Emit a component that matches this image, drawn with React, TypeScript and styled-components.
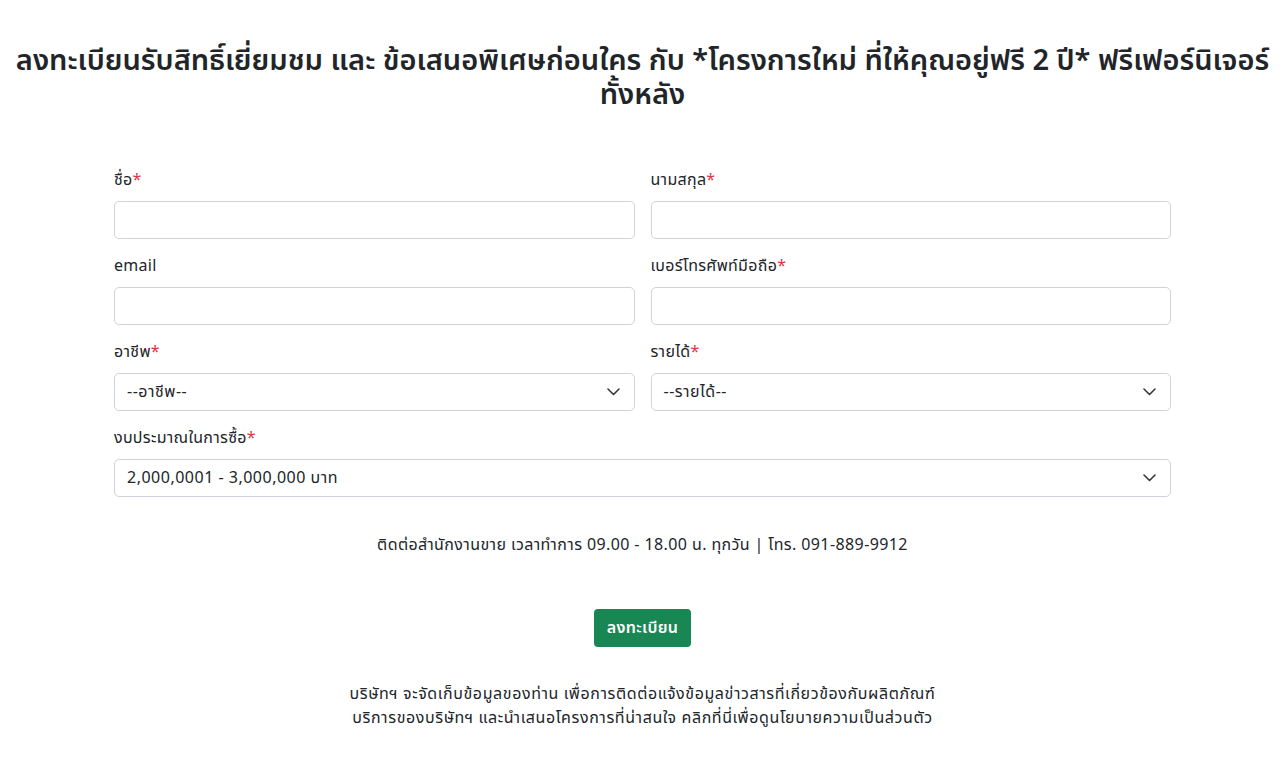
import React from "react";
import styled, { createGlobalStyle } from "styled-components";

const Global = createGlobalStyle`
  body {
    margin: 0;
    background: #ffffff;
    font-family: "Noto Sans Thai", "Noto Sans", "Liberation Sans", sans-serif;
    color: #212529;
  }
`;

const Page = styled.div`
  display: flex;
  flex-direction: column;
  align-items: center;
  padding-top: 44px;
`;

const Title = styled.h1`
  margin: 0;
  font-size: 29px;
  font-weight: 600;
  line-height: 34px;
  text-align: center;
  color: #212529;
  width: 1285px;
`;

const Form = styled.form`
  width: 1057px;
  margin-top: 58px;
  display: grid;
  grid-template-columns: 1fr 1fr;
  column-gap: 16px;
  row-gap: 17px;
`;

const Field = styled.div<{ $full?: boolean }>`
  display: flex;
  flex-direction: column;
  gap: 11px;
  grid-column: ${(p) => (p.$full ? "1 / -1" : "auto")};
`;

const Label = styled.label`
  font-size: 16px;
  letter-spacing: 0.3px;
  line-height: 20px;
  height: 20px;
  color: #212529;
`;

const Req = styled.span`
  color: #dc3545;
`;

const Input = styled.input`
  box-sizing: border-box;
  height: 38px;
  width: 100%;
  border: 1px solid #ced4da;
  border-radius: 5px;
  padding: 6px 12px;
  font: inherit;
  font-size: 16px;
`;

const SelectWrap = styled.div`
  position: relative;
  height: 38px;
  box-sizing: border-box;
  border: 1px solid #ced4da;
  border-radius: 5px;
  display: flex;
  align-items: center;
  padding: 0 12px;
  font-size: 16px;
  letter-spacing: 0.5px;
  color: #212529;
`;

const Chevron = styled.svg`
  position: absolute;
  right: 14px;
  top: 50%;
  transform: translateY(-50%);
`;

const Contact = styled.p`
  margin: 38px 0 0;
  font-size: 16px;
  letter-spacing: 0.4px;
  line-height: 20px;
  text-align: center;
`;

const Button = styled.button`
  margin-top: 54px;
  background: #198754;
  color: #fff;
  border: none;
  border-radius: 4px;
  height: 38px;
  padding: 0 13px;
  font: inherit;
  font-size: 16px;
  letter-spacing: 0.3px;
  font-weight: 600;
`;

const Footer = styled.p`
  margin: 35px 0 0;
  font-size: 16px;
  letter-spacing: 0.6px;
  line-height: 24px;
  text-align: center;
`;

const Select = ({ value }: { value: string }) => (
  <SelectWrap>
    {value}
    <Chevron width="13" height="8" viewBox="0 0 13 8">
      <path d="M1 1l5.5 5.5L12 1" fill="none" stroke="#343a40" strokeWidth="1.6" strokeLinecap="round" strokeLinejoin="round" />
    </Chevron>
  </SelectWrap>
);

export default function App() {
  return (
    <>
      <Global />
      <Page>
        <Title>
          ลงทะเบียนรับสิทธิ์เยี่ยมชม และ ข้อเสนอพิเศษก่อนใคร กับ *โครงการใหม่ ที่ให้คุณอยู่ฟรี 2 ปี* ฟรีเฟอร์นิเจอร์
          <br />
          ทั้งหลัง
        </Title>
        <Form>
          <Field>
            <Label>ชื่อ<Req>*</Req></Label>
            <Input />
          </Field>
          <Field>
            <Label>นามสกุล<Req>*</Req></Label>
            <Input />
          </Field>
          <Field>
            <Label>email</Label>
            <Input />
          </Field>
          <Field>
            <Label>เบอร์โทรศัพท์มือถือ<Req>*</Req></Label>
            <Input />
          </Field>
          <Field>
            <Label>อาชีพ<Req>*</Req></Label>
            <Select value="--อาชีพ--" />
          </Field>
          <Field>
            <Label>รายได้<Req>*</Req></Label>
            <Select value="--รายได้--" />
          </Field>
          <Field $full>
            <Label>งบประมาณในการซื้อ<Req>*</Req></Label>
            <Select value="2,000,0001 - 3,000,000 บาท" />
          </Field>
        </Form>
        <Contact>ติดต่อสำนักงานขาย เวลาทำการ 09.00 - 18.00 น. ทุกวัน | โทร. 091-889-9912</Contact>
        <Button type="button">ลงทะเบียน</Button>
        <Footer>
          บริษัทฯ จะจัดเก็บข้อมูลของท่าน เพื่อการติดต่อแจ้งข้อมูลข่าวสารที่เกี่ยวข้องกับผลิตภัณฑ์
          <br />
          บริการของบริษัทฯ และนำเสนอโครงการที่น่าสนใจ คลิกที่นี่เพื่อดูนโยบายความเป็นส่วนตัว
        </Footer>
      </Page>
    </>
  );
}
